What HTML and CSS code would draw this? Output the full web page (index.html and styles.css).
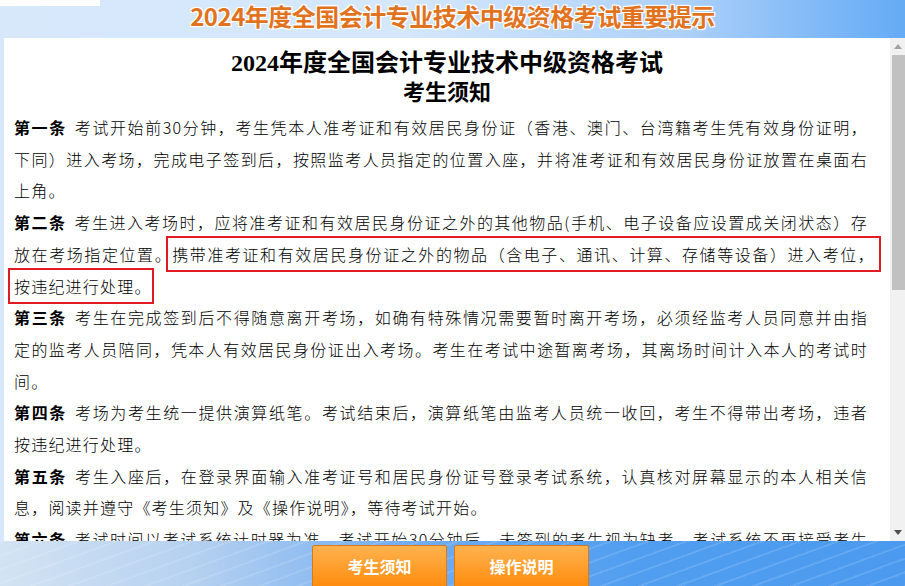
FILE: index.html
```html
<!DOCTYPE html>
<html lang="zh-CN">
<head>
  <meta charset="UTF-8" />
  <meta name="viewport" content="width=device-width, initial-scale=1.0" />
  <title>2024年度全国会计专业技术中级资格考试重要提示</title>
  <link rel="stylesheet" href="styles.css">
</head>
<body>
  <div class="corner"></div>
  <header class="banner">2024年度全国会计专业技术中级资格考试重要提示</header>

  <div class="main">
    <section class="content">
      <h1>2024年度全国会计专业技术中级资格考试</h1>
      <h2>考生须知</h2>

      <p>
        <span class="ln"><b>第一条</b> 考试开始前30分钟，考生凭本人准考证和有效居民身份证（香港、澳门、台湾籍考生凭有效身份证明，</span>
        <span class="ln">下同）进入考场，完成电子签到后，按照监考人员指定的位置入座，并将准考证和有效居民身份证放置在桌面右</span>
        <span class="ln end">上角。</span>
      </p>
      <p>
        <span class="ln"><b>第二条</b> 考生进入考场时，应将准考证和有效居民身份证之外的其他物品(手机、电子设备应设置成关闭状态）存</span>
        <span class="ln">放在考场指定位置。<span class="mark wide">携带准考证和有效居民身份证之外的物品（含电子、通讯、计算、存储等设备）进入考位，</span></span>
        <span class="ln end"><span class="mark short">按违纪进行处理。</span></span>
      </p>
      <p>
        <span class="ln"><b>第三条</b> 考生在完成签到后不得随意离开考场，如确有特殊情况需要暂时离开考场，必须经监考人员同意并由指</span>
        <span class="ln">定的监考人员陪同，凭本人有效居民身份证出入考场。考生在考试中途暂离考场，其离场时间计入本人的考试时</span>
        <span class="ln end">间。</span>
      </p>
      <p>
        <span class="ln"><b>第四条</b> 考场为考生统一提供演算纸笔。考试结束后，演算纸笔由监考人员统一收回，考生不得带出考场，违者</span>
        <span class="ln end">按违纪进行处理。</span>
      </p>
      <p>
        <span class="ln"><b>第五条</b> 考生入座后，在登录界面输入准考证号和居民身份证号登录考试系统，认真核对屏幕显示的本人相关信</span>
        <span class="ln end">息，阅读并遵守《考生须知》及《操作说明》，等待考试开始。</span>
      </p>
      <p>
        <span class="ln"><b>第六条</b> 考试时间以考试系统计时器为准，考试开始30分钟后，未签到的考生视为缺考，考试系统不再接受考生</span>
        <span class="ln end">登录。考试开始后，考生须在考试系统中作答。</span>
      </p>
      <p><b>第七条</b> 考生在考试过程中须遵守考场纪律，保持安静，不得交头接耳、左顾右盼、打手势、做暗号，不得夹带、旁窥、抄袭或者有意让他人抄袭。</p>
      <p><b>第八条</b> 考试过程中如出现计算机故障、网络故障及供电故障等异常情况，考生应举手示意并听从监考人员安排。</p>
    </section>

    <div class="scrollbar">
      <div class="sb-btn">
        <svg width="8" height="5" viewBox="0 0 8 5"><path d="M0 5 L4 0 L8 5 Z" fill="#a3a3a3"/></svg>
      </div>
      <div class="sb-track">
        <div class="sb-thumb"></div>
      </div>
      <div class="sb-btn">
        <svg width="8" height="5" viewBox="0 0 8 5"><path d="M0 0 L8 0 L4 5 Z" fill="#505050"/></svg>
      </div>
    </div>
  </div>

  <footer class="bottom">
    <button class="btn">考生须知</button>
    <button class="btn">操作说明</button>
  </footer>
</body>
</html>
```

FILE: styles.css
```css
html, body {
  margin: 0;
  height: 100%;
  overflow: hidden;
}
body {
  font-family: "Noto Sans CJK SC", sans-serif;
  background: linear-gradient(90deg, #d7e8fb 0%, #d4e7fb 45%, #aed1f9 75%, #64abf5 100%);
  position: relative;
}
.corner {
  position: absolute;
  top: 0;
  left: 0;
  width: 100px;
  height: 6px;
  background: #fff;
}
.banner {
  height: 38px;
  line-height: 32px;
  text-align: center;
  font-size: 24px;
  font-weight: bold;
  letter-spacing: -0.5px;
  color: #e2731e;
  text-shadow: 1px 1px 0 #fff, -1px -1px 0 #fff, 1px -1px 0 #fff, -1px 1px 0 #fff, 0 0 3px #fff;
}
.main {
  height: 503px;
  padding-left: 4px;
  display: flex;
}
.content {
  flex: 1;
  background: #fff;
  overflow: hidden;
  padding: 0 22px 0 10px;
  color: #000;
}
.content h1,
.content h2 {
  text-align: center;
  font-family: "Liberation Serif", "Noto Sans CJK SC", serif;
  margin-right: -12px;
}
.content h1 {
  margin-top: 9px;
  margin-bottom: 0;
  font-size: 24px;
  line-height: 32px;
}
.content h2 {
  margin-top: 0;
  margin-bottom: 5px;
  font-size: 22px;
  line-height: 28px;
}
.content p {
  margin: 0;
  font-size: 16px;
  font-weight: 300;
  line-height: 31.7px;
  letter-spacing: 1.2px;
  text-align: justify;
}
.content p b {
  font-weight: bold;
  margin-right: 3px;
}
.ln {
  display: block;
  text-align-last: justify;
}
.ln.end {
  text-align-last: auto;
}
.mark {
  border: 2px solid #e01b22;
  padding: 4px 4px;
  margin-left: -6px;
}
.mark.wide {
  margin-right: -13px;
}
.mark.short {
  padding-right: 0;
}

/* scroll bar beside the text */
.scrollbar {
  width: 15px;
  background: #f1f1f1;
  display: flex;
  flex-direction: column;
}
.sb-btn {
  height: 17px;
  display: flex;
  align-items: center;
  justify-content: center;
}
.sb-track {
  flex: 1;
}
.sb-thumb {
  margin-left: 2px;
  height: 235px;
  background: #c1c1c1;
}

.bottom {
  height: 45px;
  display: flex;
  justify-content: center;
  gap: 7px;
  padding: 4px 4px 0 0;
  box-sizing: border-box;
  background:
    repeating-linear-gradient(160deg, rgba(255, 255, 255, 0.12) 0 2px, transparent 2px 13px),
    linear-gradient(90deg, #d3e3f3 0%, #b4d0f0 22%, #72adf2 45%, #519ef0 70%, #4b9aef 100%);
}
.btn {
  width: 135px;
  height: 44px;
  border: 1px solid #d9781a;
  border-radius: 2px;
  background: linear-gradient(#ffb24f, #ff8b0c);
  color: #fff;
  font-family: "Noto Sans CJK SC", sans-serif;
  font-size: 16px;
  font-weight: bold;
  padding: 0 0 3px;
  cursor: pointer;
}
```
